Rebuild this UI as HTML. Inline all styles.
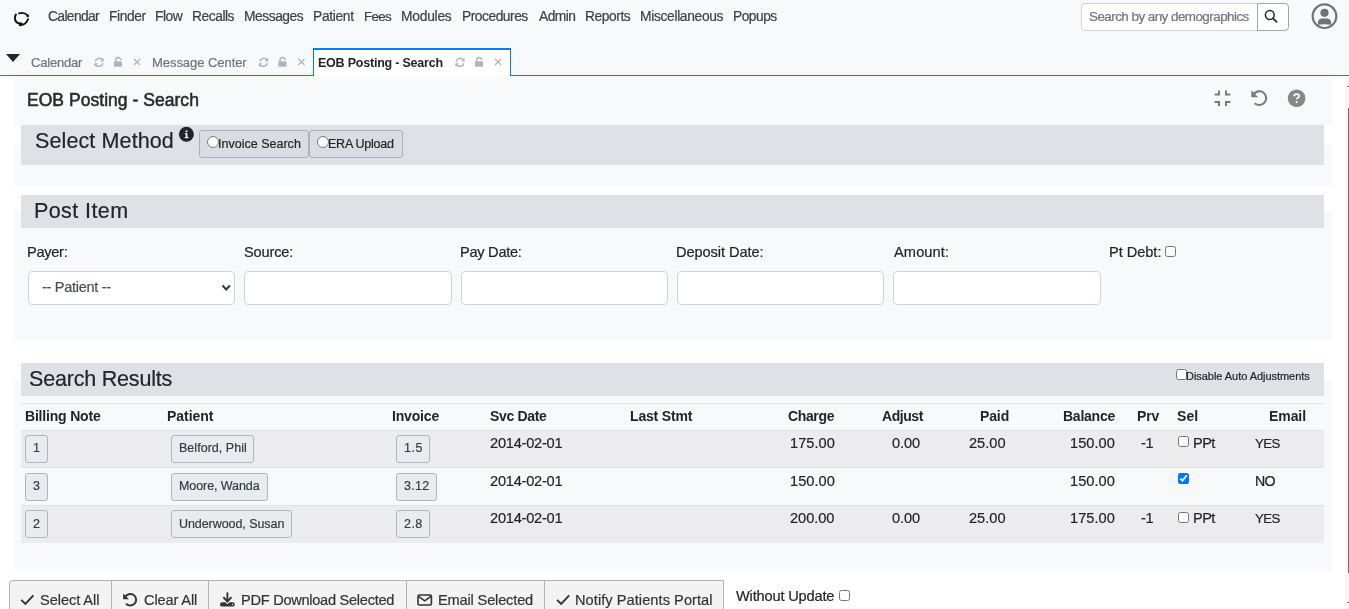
<!DOCTYPE html>
<html><head><meta charset="utf-8">
<style>
html,body{margin:0;padding:0}
body{width:1349px;height:609px;overflow:hidden;position:relative;background:#fff;font-family:"Liberation Sans",sans-serif}
.a{position:absolute;box-sizing:border-box}
.t{position:absolute;white-space:nowrap;line-height:1;font-family:"Liberation Sans",sans-serif;will-change:transform}
svg{position:absolute;overflow:visible}
input[type=checkbox],input[type=radio]{position:absolute;margin:0}
</style></head><body>
<!-- top strip -->
<div class="a" style="left:0;top:0;width:1349px;height:75px;background:#f8f9fa"></div>
<div class="a" style="left:0;top:75px;width:1349px;height:1px;background:#007bff"></div>
<!-- active tab -->
<div class="a" style="left:313px;top:48px;width:198px;height:28px;background:#fff;border:1px solid #007bff;border-top:2px solid #007bff;border-bottom:none"></div>
<!-- search -->
<div class="a" style="left:1081px;top:3px;width:177px;height:28px;background:#fff;border:1px solid #ced4da;border-radius:4px 0 0 4px"></div>
<div class="a" style="left:1257px;top:3px;width:32px;height:28px;background:#fff;border:1px solid #9ea6ae;border-radius:0 4px 4px 0"></div>

<!-- content containers -->
<div class="a" style="left:14px;top:77px;width:1318px;height:48px;background:#f8f9fa"></div>
<div class="a" style="left:14px;top:145px;width:1318px;height:41px;background:#f8f9fa"></div>
<div class="a" style="left:21px;top:125px;width:1303px;height:40px;background:#dee2e6"></div>
<div class="a" style="left:14px;top:211px;width:1318px;height:129px;background:#f8f9fa"></div>
<div class="a" style="left:21px;top:195px;width:1303px;height:33px;background:#dee2e6"></div>
<div class="a" style="left:14px;top:380px;width:1318px;height:191px;background:#f8f9fa"></div>
<div class="a" style="left:21px;top:363px;width:1303px;height:33px;background:#dee2e6"></div>

<!-- method buttons -->
<div class="a" style="left:199px;top:130px;width:110px;height:28px;background:#d9dde1;border:1px solid #a9b1b9;border-radius:3px"></div>
<div class="a" style="left:309px;top:130px;width:94px;height:28px;background:#d9dde1;border:1px solid #a9b1b9;border-radius:3px"></div>
<input type="radio" style="left:207px;top:136px;width:12px;height:12px">
<input type="radio" style="left:317px;top:136px;width:12px;height:12px">

<!-- post item inputs -->
<div class="a" style="left:28px;top:271px;width:207px;height:34px;background:#fff;border:1px solid #ced4da;border-radius:4px"></div>
<div class="a" style="left:244px;top:271px;width:208px;height:34px;background:#fff;border:1px solid #ced4da;border-radius:4px"></div>
<div class="a" style="left:461px;top:271px;width:207px;height:34px;background:#fff;border:1px solid #ced4da;border-radius:4px"></div>
<div class="a" style="left:677px;top:271px;width:207px;height:34px;background:#fff;border:1px solid #ced4da;border-radius:4px"></div>
<div class="a" style="left:893px;top:271px;width:208px;height:34px;background:#fff;border:1px solid #ced4da;border-radius:4px"></div>
<input type="checkbox" style="left:1165px;top:246px;width:11px;height:11px">
<svg style="left:0;top:0" width="1" height="1"><path d="M222.5 285.5 L226.2 289.5 L229.9 285.5" fill="none" stroke="#343a40" stroke-width="2"/></svg>

<input type="checkbox" style="left:1176px;top:369px;width:11px;height:11px">

<!-- table -->
<div class="a" style="left:21px;top:403px;width:1303px;height:1px;background:#dee2e6"></div>
<div class="a" style="left:21px;top:430px;width:1303px;height:1px;background:#dee2e6"></div>
<div class="a" style="left:21px;top:431px;width:1303px;height:36px;background:#ececee"></div>
<div class="a" style="left:21px;top:467px;width:1303px;height:1px;background:#dee2e6"></div>
<div class="a" style="left:21px;top:505px;width:1303px;height:1px;background:#dee2e6"></div>
<div class="a" style="left:21px;top:506px;width:1303px;height:37px;background:#ececee"></div>

<!-- table buttons -->
<div class="a" style="left:25px;top:435px;width:23px;height:28px;background:#e9ecef;border:1px solid #adb5bd;border-radius:3px"></div>
<div class="a" style="left:171px;top:435px;width:83px;height:28px;background:#e9ecef;border:1px solid #adb5bd;border-radius:3px"></div>
<div class="a" style="left:396px;top:435px;width:34px;height:28px;background:#e9ecef;border:1px solid #adb5bd;border-radius:3px"></div>
<div class="a" style="left:25px;top:473px;width:23px;height:28px;background:#e9ecef;border:1px solid #adb5bd;border-radius:3px"></div>
<div class="a" style="left:171px;top:473px;width:97px;height:28px;background:#e9ecef;border:1px solid #adb5bd;border-radius:3px"></div>
<div class="a" style="left:396px;top:473px;width:41px;height:28px;background:#e9ecef;border:1px solid #adb5bd;border-radius:3px"></div>
<div class="a" style="left:25px;top:510px;width:23px;height:28px;background:#e9ecef;border:1px solid #adb5bd;border-radius:3px"></div>
<div class="a" style="left:171px;top:510px;width:121px;height:28px;background:#e9ecef;border:1px solid #adb5bd;border-radius:3px"></div>
<div class="a" style="left:396px;top:510px;width:34px;height:28px;background:#e9ecef;border:1px solid #adb5bd;border-radius:3px"></div>
<input type="checkbox" style="left:1178px;top:436px;width:11px;height:11px">
<input type="checkbox" checked style="left:1178px;top:473px;width:11px;height:11px">
<input type="checkbox" style="left:1178px;top:512px;width:11px;height:11px">

<!-- bottom buttons -->
<div class="a" style="left:9px;top:580px;width:715px;height:40px;background:#f3f3f3;border:1px solid #adb5bd;border-radius:4px 0 0 0"></div>
<div class="a" style="left:111px;top:580px;width:1px;height:30px;background:#adb5bd"></div>
<div class="a" style="left:208px;top:580px;width:1px;height:30px;background:#adb5bd"></div>
<div class="a" style="left:406px;top:580px;width:1px;height:30px;background:#adb5bd"></div>
<div class="a" style="left:544px;top:580px;width:1px;height:30px;background:#adb5bd"></div>
<input type="checkbox" style="left:839px;top:590px;width:11px;height:11px">

<!-- scrollbar -->
<div class="a" style="left:1345px;top:76px;width:4px;height:533px;background:#f7f7f7"></div>
<div class="a" style="left:1348px;top:108px;width:1px;height:465px;background:#6b6b6b"></div>

<!-- ICONS -->
<svg style="left:0;top:0" width="1" height="1" id="icons">
 <!-- logo -->
 <path d="M19 13.4 Q24 11.6 27.6 15.4" fill="none" stroke="#111" stroke-width="1.8" stroke-linecap="round"/>
 <circle cx="27.7" cy="15.9" r="1.35" fill="#111"/>
 <path d="M15.9 14.5 Q13.6 18.6 16.3 21.9 Q18.4 23.8 21.6 23.5" fill="none" stroke="#111" stroke-width="2" stroke-linecap="round"/>
 <path d="M19.8 25 Q25.6 25.6 28.1 19.2" fill="none" stroke="#111" stroke-width="1.8" stroke-linecap="round"/>
 <circle cx="20.2" cy="24.9" r="1.25" fill="#111"/>
 <!-- caret -->
 <path d="M6 54 L20 54 L13 62 Z" fill="#212529"/>
 <!-- user circle -->
 <circle cx="1324.5" cy="16.2" r="11.8" fill="none" stroke="#6c757d" stroke-width="2.2"/>
 <circle cx="1324.5" cy="12.8" r="4.1" fill="#6c757d"/>
 <path d="M1318 24.8 L1318 22 C1318 19.8 1320 18.6 1322 18.6 L1327 18.6 C1329 18.6 1331 19.8 1331 22 L1331 24.8 Q1324.5 23.6 1318 24.8 Z" fill="#6c757d"/>
 <!-- search -->
 <circle cx="1269.8" cy="15" r="4.4" fill="none" stroke="#212529" stroke-width="1.5"/>
 <path d="M1273 18.3 L1276.6 21.9" stroke="#212529" stroke-width="1.7" stroke-linecap="round"/>
 <!-- compress -->
 <g fill="none" stroke="#7b7b7b" stroke-width="2">
  <path d="M1214.6 94.6 H1219 V90.6"/><path d="M1230.4 94.6 H1226 V90.6"/>
  <path d="M1214.6 102.1 H1219 V106"/><path d="M1230.4 102.1 H1226 V106"/>
 </g>
 <!-- undo -->
 <path d="M1253.4 94.5 A6.9 6.9 0 1 1 1254.6 103.2" fill="none" stroke="#7b7b7b" stroke-width="2.1"/>
 <path d="M1251.3 90.2 L1251.3 97.2 L1258.2 97.2 Z" fill="#7b7b7b"/>
 <!-- help -->
 <circle cx="1296.6" cy="98.2" r="8.8" fill="#888"/>
 <path d="M1294.2 96.3 Q1294.2 94.2 1296.6 94.2 Q1299.1 94.2 1299.1 96.2 Q1299.1 97.4 1297.7 98 Q1296.6 98.5 1296.6 99.3" fill="none" stroke="#fff" stroke-width="1.8"/>
 <circle cx="1296.6" cy="101.9" r="1" fill="#fff"/>
 <!-- info -->
 <circle cx="186.4" cy="134.2" r="7.5" fill="#212529"/>
 <rect x="185.7" y="133.2" width="1.7" height="4.6" fill="#fff"/><rect x="184.7" y="137" width="3.8" height="1.2" fill="#fff"/><rect x="184.9" y="133.2" width="1.5" height="1" fill="#fff"/>
 <circle cx="186.5" cy="131.2" r="1" fill="#fff"/>
</svg>
<!-- tab icons -->
<svg style="left:0;top:0" width="1" height="1">
 <g id="tabic">
  <path d="M95.2 61.5 A4.2 4.2 0 0 1 102.6 60" fill="none" stroke="#adb5bd" stroke-width="1.5"/>
  <path d="M103.6 57.8 L103.6 61.4 L100 61.4 Z" fill="#adb5bd"/>
  <path d="M102.8 63.2 A4.2 4.2 0 0 1 95.4 64.7" fill="none" stroke="#adb5bd" stroke-width="1.5"/>
  <path d="M94.4 66.8 L94.4 63.2 L98 63.2 Z" fill="#adb5bd"/>
  <rect x="113.9" y="61.3" width="8.1" height="5.5" rx="0.8" fill="#adb5bd"/>
  <path d="M115.6 61.5 V60.3 A2.6 2.6 0 0 1 120.8 60" fill="none" stroke="#adb5bd" stroke-width="1.5"/>
  <path d="M134 59 L140 65 M140 59 L134 65" stroke="#adb5bd" stroke-width="1.3"/>
 </g>
 <use href="#tabic" x="164.5" y="0"/>
 <use href="#tabic" x="361" y="0"/>
</svg>
<!-- bottom button icons -->
<svg style="left:0;top:0" width="1" height="1">
 <g fill="none" stroke="#333" stroke-width="1.9">
 <path d="M21.2 599.8 L25.4 604 L33.4 595.4"/>
 <path d="M125 597.5 A5.8 5.8 0 1 1 126 603.6"/>
 <path d="M227.4 592.4 V601"/>
 <path d="M223.3 597.2 L227.4 601.5 L231.5 597.2"/>
 <path d="M557 599.8 L561.2 604 L569.2 595.4"/>
 </g>
 <path d="M123.1 593.4 L123.1 599.2 L128.9 599.2 Z" fill="#333"/>
 <path d="M222.2 602.2 H225.2 L227.4 604.2 L229.6 602.2 H232.6 A2.2 2.2 0 0 1 234.8 604.4 A2.2 2.2 0 0 1 232.6 606.6 H222.2 A2.2 2.2 0 0 1 220 604.4 A2.2 2.2 0 0 1 222.2 602.2 Z" fill="#333"/>
 <circle cx="232.5" cy="604.4" r="0.7" fill="#f3f3f3"/>
 <rect x="418" y="595" width="13.4" height="10" rx="1.3" fill="none" stroke="#333" stroke-width="1.6"/>
 <path d="M418.5 596.3 L424.7 600.8 L430.9 596.3" fill="none" stroke="#333" stroke-width="1.6"/>
</svg>
<!-- scrollbar arrows -->
<div class="a" style="left:1347px;top:86px;width:2px;height:1px;background:#777"></div>
<div class="a" style="left:1347px;top:602px;width:2px;height:1px;background:#777"></div>
<span class="t" style="left:47.91px;top:10px;font-size:13.8px;letter-spacing:-0.619px;font-weight:400;color:#3b4147;-webkit-text-stroke:0.2px #3b4147;">Calendar</span>
<span class="t" style="left:108.70px;top:10px;font-size:13.8px;letter-spacing:-0.406px;font-weight:400;color:#3b4147;-webkit-text-stroke:0.2px #3b4147;">Finder</span>
<span class="t" style="left:154.90px;top:10px;font-size:13.8px;letter-spacing:-0.480px;font-weight:400;color:#3b4147;-webkit-text-stroke:0.2px #3b4147;">Flow</span>
<span class="t" style="left:192.40px;top:10px;font-size:13.8px;letter-spacing:-0.455px;font-weight:400;color:#3b4147;-webkit-text-stroke:0.2px #3b4147;">Recalls</span>
<span class="t" style="left:244.40px;top:10px;font-size:13.8px;letter-spacing:-0.454px;font-weight:400;color:#3b4147;-webkit-text-stroke:0.2px #3b4147;">Messages</span>
<span class="t" style="left:312.90px;top:10px;font-size:13.8px;letter-spacing:-0.315px;font-weight:400;color:#3b4147;-webkit-text-stroke:0.2px #3b4147;">Patient</span>
<span class="t" style="left:364.18px;top:10px;font-size:13.4px;letter-spacing:-0.689px;font-weight:400;color:#3b4147;-webkit-text-stroke:0.2px #3b4147;">Fees</span>
<span class="t" style="left:401.40px;top:10px;font-size:13.8px;letter-spacing:-0.232px;font-weight:400;color:#3b4147;-webkit-text-stroke:0.2px #3b4147;">Modules</span>
<span class="t" style="left:461.65px;top:10px;font-size:13.8px;letter-spacing:-0.478px;font-weight:400;color:#3b4147;-webkit-text-stroke:0.2px #3b4147;">Procedures</span>
<span class="t" style="left:538.50px;top:10px;font-size:13.8px;letter-spacing:-0.523px;font-weight:400;color:#3b4147;-webkit-text-stroke:0.2px #3b4147;">Admin</span>
<span class="t" style="left:584.65px;top:10px;font-size:13.8px;letter-spacing:-0.425px;font-weight:400;color:#3b4147;-webkit-text-stroke:0.2px #3b4147;">Reports</span>
<span class="t" style="left:640.15px;top:10px;font-size:13.8px;letter-spacing:-0.327px;font-weight:400;color:#3b4147;-webkit-text-stroke:0.2px #3b4147;">Miscellaneous</span>
<span class="t" style="left:733.15px;top:10px;font-size:13.8px;letter-spacing:-0.507px;font-weight:400;color:#3b4147;-webkit-text-stroke:0.2px #3b4147;">Popups</span>
<span class="t" style="left:1088.96px;top:10px;font-size:13.4px;letter-spacing:-0.525px;font-weight:400;color:#6c757d;-webkit-text-stroke:0.2px #6c757d;">Search by any demographics</span>
<span class="t" style="left:30.85px;top:56px;font-size:13.0px;letter-spacing:-0.205px;font-weight:400;color:#6c757d;-webkit-text-stroke:0.2px #6c757d;">Calendar</span>
<span class="t" style="left:152.46px;top:56px;font-size:13.0px;letter-spacing:-0.052px;font-weight:400;color:#6c757d;-webkit-text-stroke:0.2px #6c757d;">Message Center</span>
<span class="t" style="left:318.25px;top:57px;font-size:12.5px;letter-spacing:-0.220px;font-weight:700;color:#212529;">EOB Posting - Search</span>
<span class="t" style="left:27.30px;top:92px;font-size:17.5px;letter-spacing:0.037px;font-weight:400;color:#2b2b2b;-webkit-text-stroke:0.55px #2b2b2b;">EOB Posting - Search</span>
<span class="t" style="left:34.89px;top:131px;font-size:21.5px;letter-spacing:0.115px;font-weight:400;color:#212529;-webkit-text-stroke:0.2px #212529;">Select Method</span>
<span class="t" style="left:34.28px;top:201px;font-size:21.5px;letter-spacing:0.408px;font-weight:400;color:#212529;-webkit-text-stroke:0.2px #212529;">Post Item</span>
<span class="t" style="left:29.14px;top:369px;font-size:21.5px;letter-spacing:-0.195px;font-weight:400;color:#212529;-webkit-text-stroke:0.2px #212529;">Search Results</span>
<span class="t" style="left:218.38px;top:138px;font-size:12.5px;letter-spacing:0.011px;font-weight:400;color:#212529;-webkit-text-stroke:0.2px #212529;">Invoice Search</span>
<span class="t" style="left:328.00px;top:138px;font-size:12.5px;letter-spacing:-0.232px;font-weight:400;color:#212529;-webkit-text-stroke:0.2px #212529;">ERA Upload</span>
<span class="t" style="left:27.33px;top:245px;font-size:14.6px;letter-spacing:-0.289px;font-weight:400;color:#212529;-webkit-text-stroke:0.2px #212529;">Payer:</span>
<span class="t" style="left:243.72px;top:245px;font-size:14.6px;letter-spacing:-0.175px;font-weight:400;color:#212529;-webkit-text-stroke:0.2px #212529;">Source:</span>
<span class="t" style="left:459.83px;top:245px;font-size:14.6px;letter-spacing:-0.270px;font-weight:400;color:#212529;-webkit-text-stroke:0.2px #212529;">Pay Date:</span>
<span class="t" style="left:675.83px;top:245px;font-size:14.6px;letter-spacing:-0.067px;font-weight:400;color:#212529;-webkit-text-stroke:0.2px #212529;">Deposit Date:</span>
<span class="t" style="left:894.00px;top:245px;font-size:14.6px;letter-spacing:0.118px;font-weight:400;color:#212529;-webkit-text-stroke:0.2px #212529;">Amount:</span>
<span class="t" style="left:1109.03px;top:245px;font-size:14.6px;letter-spacing:-0.042px;font-weight:400;color:#212529;-webkit-text-stroke:0.2px #212529;">Pt Debt:</span>
<span class="t" style="left:42.22px;top:280px;font-size:14.6px;letter-spacing:-0.317px;font-weight:400;color:#495057;-webkit-text-stroke:0.2px #495057;">-- Patient --</span>
<span class="t" style="left:1186.12px;top:371px;font-size:11.0px;letter-spacing:-0.043px;font-weight:400;color:#212529;-webkit-text-stroke:0.2px #212529;">Disable Auto Adjustments</span>
<span class="t" style="left:24.66px;top:409px;font-size:14.0px;letter-spacing:-0.188px;font-weight:700;color:#212529;">Billing Note</span>
<span class="t" style="left:166.66px;top:409px;font-size:14.0px;letter-spacing:-0.049px;font-weight:700;color:#212529;">Patient</span>
<span class="t" style="left:392.41px;top:409px;font-size:14.0px;letter-spacing:-0.173px;font-weight:700;color:#212529;">Invoice</span>
<span class="t" style="left:489.97px;top:409px;font-size:14.0px;letter-spacing:-0.321px;font-weight:700;color:#212529;">Svc Date</span>
<span class="t" style="left:629.91px;top:409px;font-size:14.0px;letter-spacing:-0.176px;font-weight:700;color:#212529;">Last Stmt</span>
<span class="t" style="left:787.94px;top:409px;font-size:14.0px;letter-spacing:-0.362px;font-weight:700;color:#212529;">Charge</span>
<span class="t" style="left:881.97px;top:409px;font-size:14.0px;letter-spacing:-0.446px;font-weight:700;color:#212529;">Adjust</span>
<span class="t" style="left:980.16px;top:409px;font-size:14.0px;letter-spacing:-0.125px;font-weight:700;color:#212529;">Paid</span>
<span class="t" style="left:1062.66px;top:409px;font-size:14.0px;letter-spacing:-0.248px;font-weight:700;color:#212529;">Balance</span>
<span class="t" style="left:1136.66px;top:409px;font-size:14.0px;letter-spacing:-0.143px;font-weight:700;color:#212529;">Prv</span>
<span class="t" style="left:1177.47px;top:409px;font-size:14.0px;letter-spacing:0.108px;font-weight:700;color:#212529;">Sel</span>
<span class="t" style="left:1269.16px;top:409px;font-size:14.0px;letter-spacing:-0.078px;font-weight:700;color:#212529;">Email</span>
<span class="t" style="left:489.52px;top:436px;font-size:14.6px;letter-spacing:-0.225px;font-weight:400;color:#212529;-webkit-text-stroke:0.2px #212529;">2014-02-01</span>
<span class="t" style="left:489.52px;top:474px;font-size:14.6px;letter-spacing:-0.225px;font-weight:400;color:#212529;-webkit-text-stroke:0.2px #212529;">2014-02-01</span>
<span class="t" style="left:489.52px;top:511px;font-size:14.6px;letter-spacing:-0.225px;font-weight:400;color:#212529;-webkit-text-stroke:0.2px #212529;">2014-02-01</span>
<span class="t" style="left:789.73px;top:436px;font-size:14.6px;letter-spacing:0.029px;font-weight:400;color:#212529;-webkit-text-stroke:0.2px #212529;">175.00</span>
<span class="t" style="left:891.81px;top:436px;font-size:14.6px;letter-spacing:-0.067px;font-weight:400;color:#212529;-webkit-text-stroke:0.2px #212529;">0.00</span>
<span class="t" style="left:969.02px;top:436px;font-size:14.6px;letter-spacing:-0.007px;font-weight:400;color:#212529;-webkit-text-stroke:0.2px #212529;">25.00</span>
<span class="t" style="left:1070.23px;top:436px;font-size:14.6px;letter-spacing:0.029px;font-weight:400;color:#212529;-webkit-text-stroke:0.2px #212529;">150.00</span>
<span class="t" style="left:1141.42px;top:436px;font-size:14.6px;letter-spacing:-0.474px;font-weight:400;color:#212529;-webkit-text-stroke:0.2px #212529;">-1</span>
<span class="t" style="left:1192.58px;top:436px;font-size:14.6px;letter-spacing:-0.573px;font-weight:400;color:#212529;-webkit-text-stroke:0.2px #212529;">PPt</span>
<span class="t" style="left:1255.48px;top:437px;font-size:13.3px;letter-spacing:-0.677px;font-weight:400;color:#212529;-webkit-text-stroke:0.2px #212529;">YES</span>
<span class="t" style="left:789.73px;top:474px;font-size:14.6px;letter-spacing:0.029px;font-weight:400;color:#212529;-webkit-text-stroke:0.2px #212529;">150.00</span>
<span class="t" style="left:1070.23px;top:474px;font-size:14.6px;letter-spacing:0.029px;font-weight:400;color:#212529;-webkit-text-stroke:0.2px #212529;">150.00</span>
<span class="t" style="left:1254.61px;top:474px;font-size:14.2px;letter-spacing:-0.735px;font-weight:400;color:#212529;-webkit-text-stroke:0.2px #212529;">NO</span>
<span class="t" style="left:790.02px;top:511px;font-size:14.6px;letter-spacing:-0.030px;font-weight:400;color:#212529;-webkit-text-stroke:0.2px #212529;">200.00</span>
<span class="t" style="left:891.81px;top:511px;font-size:14.6px;letter-spacing:-0.067px;font-weight:400;color:#212529;-webkit-text-stroke:0.2px #212529;">0.00</span>
<span class="t" style="left:969.02px;top:511px;font-size:14.6px;letter-spacing:-0.007px;font-weight:400;color:#212529;-webkit-text-stroke:0.2px #212529;">25.00</span>
<span class="t" style="left:1070.23px;top:511px;font-size:14.6px;letter-spacing:0.029px;font-weight:400;color:#212529;-webkit-text-stroke:0.2px #212529;">175.00</span>
<span class="t" style="left:1141.42px;top:511px;font-size:14.6px;letter-spacing:-0.474px;font-weight:400;color:#212529;-webkit-text-stroke:0.2px #212529;">-1</span>
<span class="t" style="left:1192.58px;top:511px;font-size:14.6px;letter-spacing:-0.573px;font-weight:400;color:#212529;-webkit-text-stroke:0.2px #212529;">PPt</span>
<span class="t" style="left:1255.48px;top:512px;font-size:13.3px;letter-spacing:-0.677px;font-weight:400;color:#212529;-webkit-text-stroke:0.2px #212529;">YES</span>
<span class="t" style="left:32.88px;top:442px;font-size:12.5px;letter-spacing:0.000px;font-weight:400;color:#343a40;-webkit-text-stroke:0.2px #343a40;">1</span>
<span class="t" style="left:178.50px;top:442px;font-size:12.5px;letter-spacing:0.032px;font-weight:400;color:#343a40;-webkit-text-stroke:0.2px #343a40;">Belford, Phil</span>
<span class="t" style="left:403.88px;top:442px;font-size:12.5px;letter-spacing:0.600px;font-weight:400;color:#343a40;-webkit-text-stroke:0.2px #343a40;">1.5</span>
<span class="t" style="left:33.38px;top:480px;font-size:12.5px;letter-spacing:0.000px;font-weight:400;color:#343a40;-webkit-text-stroke:0.2px #343a40;">3</span>
<span class="t" style="left:178.50px;top:480px;font-size:12.5px;letter-spacing:-0.074px;font-weight:400;color:#343a40;-webkit-text-stroke:0.2px #343a40;">Moore, Wanda</span>
<span class="t" style="left:404.38px;top:480px;font-size:12.5px;letter-spacing:0.291px;font-weight:400;color:#343a40;-webkit-text-stroke:0.2px #343a40;">3.12</span>
<span class="t" style="left:33.12px;top:518px;font-size:12.5px;letter-spacing:0.000px;font-weight:400;color:#343a40;-webkit-text-stroke:0.2px #343a40;">2</span>
<span class="t" style="left:178.62px;top:518px;font-size:12.5px;letter-spacing:-0.066px;font-weight:400;color:#343a40;-webkit-text-stroke:0.2px #343a40;">Underwood, Susan</span>
<span class="t" style="left:404.12px;top:518px;font-size:12.5px;letter-spacing:0.475px;font-weight:400;color:#343a40;-webkit-text-stroke:0.2px #343a40;">2.8</span>
<span class="t" style="left:40.17px;top:593px;font-size:14.6px;letter-spacing:-0.069px;font-weight:400;color:#333;-webkit-text-stroke:0.2px #333;">Select All</span>
<span class="t" style="left:143.77px;top:593px;font-size:14.6px;letter-spacing:-0.129px;font-weight:400;color:#333;-webkit-text-stroke:0.2px #333;">Clear All</span>
<span class="t" style="left:241.33px;top:593px;font-size:14.6px;letter-spacing:-0.279px;font-weight:400;color:#333;-webkit-text-stroke:0.2px #333;">PDF Download Selected</span>
<span class="t" style="left:438.33px;top:593px;font-size:14.6px;letter-spacing:-0.165px;font-weight:400;color:#333;-webkit-text-stroke:0.2px #333;">Email Selected</span>
<span class="t" style="left:575.33px;top:593px;font-size:14.6px;letter-spacing:0.060px;font-weight:400;color:#333;-webkit-text-stroke:0.2px #333;">Notify Patients Portal</span>
<span class="t" style="left:736.00px;top:589px;font-size:14.6px;letter-spacing:-0.162px;font-weight:400;color:#212529;-webkit-text-stroke:0.2px #212529;">Without Update</span>
</body></html>
